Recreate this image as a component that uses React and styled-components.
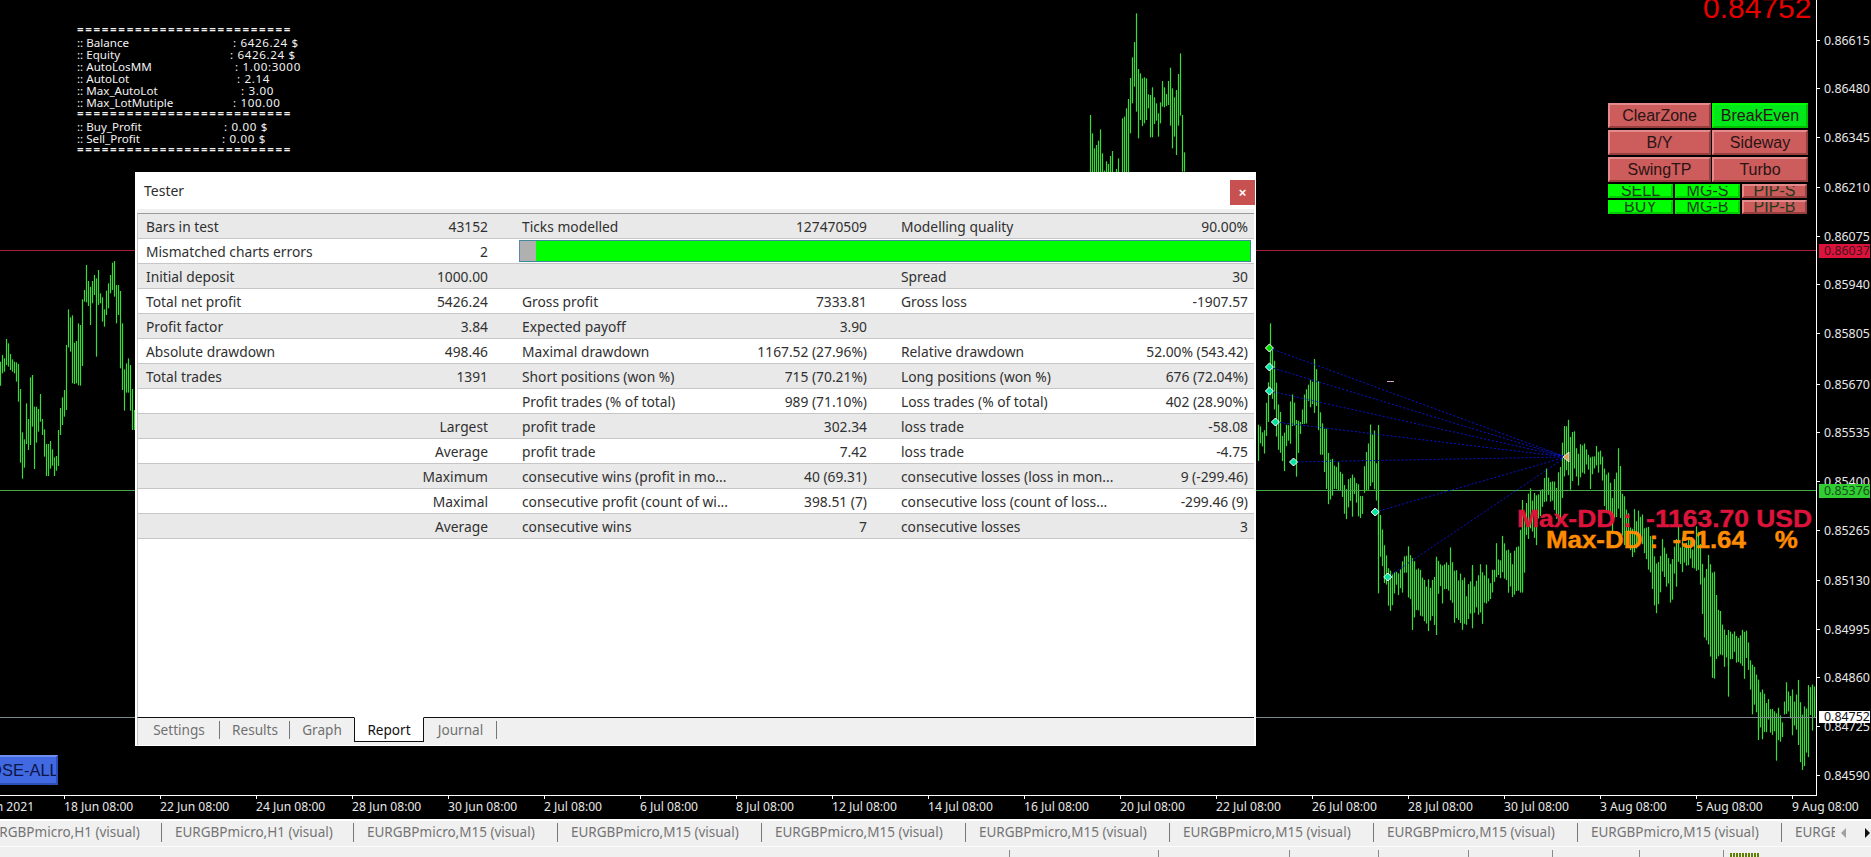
import React from 'react';
import styled, { createGlobalStyle } from 'styled-components';

const Global = createGlobalStyle`
  html, body { margin: 0; padding: 0; background: #000; overflow: hidden; }
  * { box-sizing: border-box; }
`;

const UI = `"Noto Sans", "Open Sans", sans-serif`;
const ARIAL = `"Liberation Sans", Arial, sans-serif`;

/* ---------- chart data ---------- */
const leftZ = [[365,437],[345,400],[355,395],[297,375],[310,380],[342,390],[358,395],[365,400],[367,425],[372,485],[447,668],[577,716],[598,683],[490,612],[537,630],[412,615],[405,560],[500,687],[500,608],[507,575],[462,545],[537,585],[568,650],[612,708],[612,708],[603,686],[628,677],[652,708],[648,692],[570,678],[504,585],[472,555],[450,530],[315,510],[208,322],[232,335],[226,430],[308,432],[303,430],[250,436],[255,437],[178,378],[150,185],[75,187],[123,198],[140,255],[123,190],[105,165],[115,350],[90,195],[160,190],[172,245],[208,260],[152,225],[130,205],[105,160],[68,150],[63,170],[135,250],[135,225],[153,385],[250,450],[388,512],[370,458],[355,458],[375,512],[447,570],[510,570]];
const leftBars = leftZ.map(([t, b], i) => [i * 2, 240 + t / 3, 240 + b / 3]);

const topZ = [[151,345],[157,400],[163,445],[169,435],[175,422],[181,388],[187,460],[193,512],[199,484],[205,492],[211,468],[217,453],[229,507],[235,475],[247,355],[253,350],[259,325],[265,297]];
const topZ2 = [[271,234,400],[277,172,310],[283,126,260],[289,40,335],[295,207,415],[301,220,360],[307,235,378],[313,232,370],[319,235,360],[325,283,325],[331,285,412],[337,262,412],[343,292,372],[349,310,362],[355,340,410],[361,307,370],[367,243,320],[373,262,322],[379,282,318],[385,243,315],[391,203,377],[397,265,445],[403,292,410],[409,270,465],[415,222,377],[421,160,347],[427,345,515],[433,457,515]];
const topBars = [
  ...topZ.map(([x, t]) => [Math.round(1040 + x / 3), t / 3, 172]),
  ...topZ2.map(([x, t, b]) => [Math.round(1040 + x / 3), t / 3, b / 3]),
];

const z5 = ([x, t, b]) => [1240 + x / 2.485, 300 + t / 3, 300 + b / 3];
const z7 = ([x, t, b]) => [1240 + x / 2.485, 640 + t / 3, 640 + b / 3];
const env = [
  ...[[40,395,445],[50,395,430],[60,395,470],[68,310,380],[76,150,250],[82,160,300],[88,210,380],[95,310,450],[105,395,470],[115,375,440],[125,340,400],[132,297,380],[140,360,420],[150,360,380],[160,290,360],[170,250,300],[178,265,330],[187,190,320],[192,190,330],[198,340,480],[205,380,480],[215,425,560],[225,470,600],[240,500,570],[250,520,590],[262,560,655],[275,530,600],[285,550,590],[295,570,640],[305,590,640],[310,450,570],[325,415,560],[335,400,500],[342,640,700],[350,680,800],[360,770,845],[375,830,950],[385,820,870],[398,820,870],[410,770,800],[420,745,870],[430,800,950],[440,800,930],[455,850,970],[470,880,980],[485,800,900],[500,790,860],[515,775,850],[530,810,930],[545,830,970],[560,880,980],[575,830,940],[590,860,930],[605,825,920],[620,840,900],[635,775,850],[650,760,830],[660,740,850],[675,780,880],[690,730,860],[702,700,860],[708,600,720],[720,590,700],[735,590,705],[745,560,640],[755,550,610],[765,520,590],[775,540,600],[785,550,650],[795,520,650],[802,385,520],[812,360,500],[820,410,570],[830,400,490],[840,460,550],[850,435,530],[860,450,500],[875,470,520],[888,450,500],[897,435,510],[905,510,610],[915,530,640],[925,580,670],[938,470,620],[948,560,690],[960,650,720],[975,690,780],[990,640,720],[1005,670,750],[1020,700,820],[1030,780,940],[1040,800,900],[1050,710,810],[1065,790,870],[1085,720,800],[1100,740,800],[1125,735,790],[1140,690,810],[1150,850,960]].map(z5),
  [1240 + 1163 / 2.485, 560, 650],
  [1240 + 1178 / 2.485, 573, 666],
  [1240 + 1190 / 2.485, 617, 653],
  ...[[1205,-18,70],[1225,-24,50],[1240,-12,65],[1260,-24,60],[1270,70,185],[1280,80,200],[1288,130,270],[1296,170,265],[1303,140,260],[1310,195,240],[1318,215,280],[1325,220,280],[1333,220,290],[1340,220,285],[1347,230,295],[1353,155,225],[1360,170,230],[1370,180,240],[1380,180,240],[1388,118,320],[1394,230,402],[1402,235,350],[1412,170,318],[1417,125,230],[1427,150,230],[1433,185,232]].map(z7),
];
const spikes = [
  ...[[76,70,250],[140,360,530],[342,375,880],[425,790,990],[485,770,1005],[575,795,985],[702,600,870]].map(z5),
  z7([1215, -4, 170]),
  z7([1288, 130, 300]),
  z7([1333, 220, 362]),
];
const noise = (i) => {
  const v = Math.sin(i * 12.9898) * 43758.5453;
  return (v - Math.floor(v)) * 2 - 1;
};
const lerp = (x, k) => {
  for (let i = 0; i < env.length - 1; i += 1) {
    const a = env[i];
    const b = env[i + 1];
    if (x >= a[0] && x <= b[0]) {
      const f = (x - a[0]) / (b[0] - a[0] || 1);
      return a[k] + (b[k] - a[k]) * f;
    }
  }
  return null;
};
const rightBars = [];
for (let x = 1256, i = 0; x < 1817; x += 2, i += 1) {
  const t = lerp(x, 1);
  const b = lerp(x, 2);
  if (t !== null) {
    const top = t + noise(i) * 6 - (noise(i * 5 + 11) > 0.8 ? 12 : 0);
    const bottom = b + noise(i + 500) * 6 + (noise(i * 7 + 3) > 0.75 ? 14 : 0);
    rightBars.push([x, top, Math.max(bottom, top + 12)]);
  }
}
const allBars = [...leftBars, ...topBars, ...rightBars, ...spikes.map(([x, t, b]) => [Math.round(x / 2) * 2, t, b])];

const targets = [[1269.4, 348, '#00e000'], [1269.4, 367, '#00e8a0'], [1269.4, 391, '#00e8a0'], [1275.4, 422, '#00e8a0'], [1293.5, 462, '#00e8a0'], [1375.2, 512, '#00e8a0'], [1387.7, 577, '#00e8a0']];

const Candles = styled.svg`
  position: absolute;
  left: 0;
  top: 0;
  width: 1817px;
  height: 795px;
`;

const ChartDrawing = () => (
  <Candles viewBox="0 0 1817 795">
    <g stroke="#38dc38" strokeWidth="1.2">
      {allBars.map(([x, t, b], i) => (
        <line key={i} x1={x + 0.5} x2={x + 0.5} y1={t} y2={b} />
      ))}
    </g>
    <line x1="0" x2="1817" y1="250.5" y2="250.5" stroke="#a5213a" />
    <line x1="0" x2="1817" y1="490.5" y2="490.5" stroke="#44a844" />
    <line x1="0" x2="1817" y1="717.5" y2="717.5" stroke="#7a8a90" />
    <line x1="1387" x2="1394" y1="381.5" y2="381.5" stroke="#d8a0d0" />
    <g stroke="#0a14d0" strokeWidth="1" strokeDasharray="2 2">
      {targets.map(([x, y], i) => (
        <line key={i} x1={x} y1={y} x2="1566" y2="457" />
      ))}
    </g>
    {targets.map(([x, y, c], i) => (
      <path key={i} d={`M${x - 4} ${y}L${x} ${y - 4}L${x + 4} ${y}L${x} ${y + 4}Z`} fill={c} stroke="#fff" strokeWidth="1" />
    ))}
    <path d="M1563 457L1569 452L1569 462Z" fill="#d8a050" stroke="#fff" strokeWidth="0.8" />
  </Candles>
);

/* ---------- page frame ---------- */
const Page = styled.div`
  width: 1871px;
  height: 857px;
  display: flex;
  flex-direction: column;
  overflow: hidden;
  background: #000;
  font-family: ${UI};
`;
const ChartRow = styled.div`
  display: flex;
  height: 796px;
  flex: none;
`;
const Plot = styled.div`
  position: relative;
  width: 1817px;
  height: 796px;
  border-bottom: 1px solid #fff;
  overflow: hidden;
  flex: none;
`;

/* ---------- price axis ---------- */
const PriceAxis = styled.div`
  position: relative;
  width: 54px;
  height: 796px;
  margin-left: -1px;
  border-left: 1px solid #fff;
  flex: none;
  overflow: hidden;
`;
const PriceMark = styled.div.attrs((p) => ({ style: { top: `${p.$y - 7}px` } }))`
  position: absolute;
  left: 0;
  width: 54px;
  height: 14px;
  padding-left: 7px;
  font: 12.4px/14px ${UI};
  color: #e8e8e8;
  white-space: nowrap;
  &::before {
    content: '';
    position: absolute;
    left: 0;
    top: 6px;
    width: 3px;
    height: 1px;
    background: #fff;
  }
`;
const PriceTag = styled.div.attrs((p) => ({ style: { top: `${p.$y}px` } }))`
  position: absolute;
  left: 2px;
  width: 52px;
  height: ${(p) => p.$h}px;
  padding-left: 5px;
  font: 12.4px/${(p) => p.$h}px ${UI};
  background: ${(p) => p.$bg};
  color: ${(p) => p.$fg};
`;

/* ---------- chart overlays ---------- */
const StatsPanel = styled.div`
  position: absolute;
  left: 77px;
  top: 25px;
  color: #f2f2f2;
  font: 11.6px/12px ${UI};
  white-space: pre;
`;
const StatRule = styled.div`
  height: 12px;
  line-height: 10px;
  letter-spacing: 1.64px;
  font-size: 11.6px;
  font-weight: 600;
`;
const StatRow = styled.div`
  display: flex;
  height: 12px;
`;
const StatLabel = styled.span`
  width: ${(p) => p.$w}px;
  flex: none;
`;
const StatValue = styled.span`
  letter-spacing: 0.65px;
`;
const BigPrice = styled.div`
  position: absolute;
  left: 1703px;
  top: -7px;
  font: 30px/30px ${ARIAL};
  color: #e60000;
`;
const DrawdownLine = styled.div`
  position: absolute;
  left: ${(p) => p.$x}px;
  top: ${(p) => p.$y}px;
  font: bold 23px/23px ${ARIAL};
  color: ${(p) => p.$c};
  -webkit-text-stroke: 0.4px ${(p) => p.$c};
  white-space: pre;
  transform: scaleX(${(p) => p.$sx});
  transform-origin: left center;
`;
const CloseAll = styled.div`
  position: absolute;
  left: -34px;
  top: 755px;
  width: 92px;
  height: 30px;
  background: #4169e1;
  border: 2px solid;
  border-color: #6d8ef0 #2f4fb8 #2f4fb8 #6d8ef0;
  color: #0c1648;
  font: 16.5px/26px ${ARIAL};
  text-align: center;
  overflow: hidden;
  white-space: nowrap;
`;

const ButtonPanel = styled.div`
  position: absolute;
  left: 1608px;
  top: 103px;
  display: flex;
  flex-direction: column;
`;
const BigRow = styled.div`
  display: flex;
  gap: 1px;
  margin-bottom: 2px;
`;
const SmallRow = styled.div`
  display: flex;
  gap: 2px;
  margin-bottom: 2px;
`;
const tones = {
  red: ['#cd5c5c', '#e58a8a', '#973f3f'],
  green: ['#00e81a', '#00ff00', '#00c000'],
  lime: ['#00ff00', '#00ff00', '#00cc00'],
};
const BigButton = styled.div`
  width: ${(p) => p.$w}px;
  height: 25px;
  background: ${(p) => tones[p.$tone][0]};
  border: 2px solid;
  border-color: ${(p) => tones[p.$tone][1]} ${(p) => tones[p.$tone][2]} ${(p) => tones[p.$tone][2]} ${(p) => tones[p.$tone][1]};
  color: #2a1414;
  font: 16px/21px ${ARIAL};
  text-align: center;
  overflow: hidden;
`;
const SmallButton = styled.div`
  width: 65px;
  height: 14px;
  background: ${(p) => tones[p.$tone][0]};
  border: 2px solid;
  border-color: ${(p) => tones[p.$tone][1]} ${(p) => tones[p.$tone][2]} ${(p) => tones[p.$tone][2]} ${(p) => tones[p.$tone][1]};
  color: #1c3a1c;
  font: 16px/10px ${ARIAL};
  text-align: center;
  overflow: hidden;
`;

/* ---------- tester window ---------- */
const TesterWindow = styled.section`
  position: absolute;
  left: 135px;
  top: 172px;
  width: 1121px;
  height: 574px;
  display: flex;
  flex-direction: column;
  background: #fff;
  padding: 0 2px 1px;
`;
const TitleBar = styled.header`
  height: 37px;
  flex: none;
  margin: 0 -2px;
  padding: 8px 1px 0 9px;
  display: flex;
  justify-content: space-between;
  align-items: flex-start;
  background: #fff;
  font: 14px/21px ${UI};
  color: #2d2d2d;
`;
const CloseButton = styled.button`
  width: 25px;
  height: 25px;
  border: 0;
  padding: 0;
  background: #c75050;
  color: #fff;
  font: bold 13px/25px ${ARIAL};
`;
const HeadGap = styled.div`
  height: 4px;
  flex: none;
  background: #f0f0f0;
`;
const ReportPane = styled.div`
  flex: 1;
  background: #fff;
  border-top: 1px solid #9a9a9a;
  border-left: 1px solid #c4c4c4;
`;
const ReportRow = styled.div`
  display: grid;
  grid-template-columns: 350px 379px 381px;
  height: 25px;
  border-bottom: 1px solid #c6c6c6;
  background: ${(p) => (p.$shade ? '#e9e9e9' : '#fff')};
`;
const Cell = styled.div`
  display: flex;
  justify-content: space-between;
  align-items: center;
  padding: 1px 0 0 ${(p) => p.$pad}px;
  font: 13.8px/23px ${UI};
  color: #303030;
  white-space: nowrap;
`;
const ProgressCell = styled.div`
  grid-column: 2 / 4;
  display: flex;
  margin: 1px -3px 1px 31px;
  height: 22px;
  border: 1px solid #3c8a9c;
  border-left-color: #5a86b0;
`;
const ProgressDone = styled.div`
  width: 16px;
  background: #b0b0b0;
  flex: none;
`;
const ProgressRest = styled.div`
  flex: 1;
  background: #00ff00;
`;
const TesterTabs = styled.nav`
  height: 28px;
  flex: none;
  display: flex;
  align-items: flex-start;
  background: #f0f0f0;
  border-top: 1px solid #111;
  border-left: 1px solid #c4c4c4;
`;
const TesterTab = styled.div`
  height: 24px;
  margin-top: ${(p) => (p.$active ? '-1px' : '0')};
  width: ${(p) => p.$w}px;
  text-align: center;
  font: 13.6px/23px ${UI};
  color: ${(p) => (p.$active ? '#111' : '#707070')};
  background: ${(p) => (p.$active ? '#fff' : 'transparent')};
  position: relative;
  ${(p) => (p.$active
    ? 'border: 1px solid #111; border-top-color: #fff; height: 25px;'
    : '')}
  ${(p) => (p.$sep
    ? `&::after { content: ''; position: absolute; right: 0; top: 3px; height: 18px; width: 1px; background: #777; }`
    : '')}
`;

/* ---------- time axis and bottom bars ---------- */
const TimeAxis = styled.div`
  height: 23px;
  flex: none;
  overflow: hidden;
  display: flex;
  margin-left: -32px;
`;
const TimeCell = styled.div`
  position: relative;
  flex: none;
  width: 96px;
  padding-top: 3px;
  font: 12.1px/16px ${UI};
  color: #e8e8e8;
  white-space: nowrap;
  &::before {
    content: '';
    position: absolute;
    left: 0;
    top: 0;
    width: 1px;
    height: 3px;
    background: #fff;
  }
`;
const ChartTabs = styled.div`
  height: 27px;
  flex: none;
  display: flex;
  background: #f0f0f0;
  border-top: 2px solid #fff;
`;
const TabStrip = styled.div`
  width: 1835px;
  flex: none;
  display: flex;
  align-items: center;
  overflow: hidden;
  padding-bottom: 2px;
`;
const TabStripInner = styled.div`
  display: flex;
  align-items: center;
  margin-left: -31px;
`;
const ChartTab = styled.div`
  width: ${(p) => p.$w}px;
  flex: none;
  height: 19px;
  padding-left: 13px;
  border-right: 1px solid #777;
  font: 13.5px/19px ${UI};
  color: #747474;
  white-space: nowrap;
  overflow: hidden;
`;
const ScrollArrows = styled.div`
  flex: 1;
  display: flex;
  align-items: center;
  gap: 19px;
  padding: 0 0 2px 6px;
`;
const StatusBar = styled.div`
  height: 11px;
  flex: none;
  display: flex;
  background: #f0f0f0;
  border-top: 1px solid #fbfbfb;
  padding-top: 3px;
`;
const StatusCell = styled.div`
  width: ${(p) => p.$w}px;
  flex: none;
  border-right: 1px solid #8a8a8a;
`;
const Traffic = styled.div`
  display: flex;
  gap: 1px;
  margin: 3px 0 0 6px;
`;
const TrafficTick = styled.span`
  width: 2px;
  height: 4px;
  background: #5f7f00;
`;

/* ---------- content ---------- */
const prices = [['0.86615', 41], ['0.86480', 89], ['0.86345', 138], ['0.86210', 188], ['0.86075', 237], ['0.85940', 285], ['0.85805', 334], ['0.85670', 385], ['0.85535', 433], ['0.85400', 482], ['0.85265', 531], ['0.85130', 581], ['0.84995', 630], ['0.84860', 678], ['0.84725', 727], ['0.84590', 776]];
const times = ['15 Jun 2021', '18 Jun 08:00', '22 Jun 08:00', '24 Jun 08:00', '28 Jun 08:00', '30 Jun 08:00', '2 Jul 08:00', '6 Jul 08:00', '8 Jul 08:00', '12 Jul 08:00', '14 Jul 08:00', '16 Jul 08:00', '20 Jul 08:00', '22 Jul 08:00', '26 Jul 08:00', '28 Jul 08:00', '30 Jul 08:00', '3 Aug 08:00', '5 Aug 08:00', '9 Aug 08:00'];
const stats = [
  ['rule'],
  [':: Balance', ': 6426.24 $', 156],
  [':: Equity', ': 6426.24 $', 153],
  [':: AutoLosMM', ': 1.00:3000', 158],
  [':: AutoLot', ': 2.14', 160],
  [':: Max_AutoLot', ': 3.00', 164],
  [':: Max_LotMutiple', ': 100.00', 156],
  ['rule'],
  [':: Buy_Profit', ': 0.00 $', 147],
  [':: Sell_Profit', ': 0.00 $', 145],
  ['rule'],
];
const rows = [
  ['Bars in test', '43152', 'Ticks modelled', '127470509', 'Modelling quality', '90.00%'],
  ['Mismatched charts errors', '2'],
  ['Initial deposit', '1000.00', '', '', 'Spread', '30'],
  ['Total net profit', '5426.24', 'Gross profit', '7333.81', 'Gross loss', '-1907.57'],
  ['Profit factor', '3.84', 'Expected payoff', '3.90', '', ''],
  ['Absolute drawdown', '498.46', 'Maximal drawdown', '1167.52 (27.96%)', 'Relative drawdown', '52.00% (543.42)'],
  ['Total trades', '1391', 'Short positions (won %)', '715 (70.21%)', 'Long positions (won %)', '676 (72.04%)'],
  ['', '', 'Profit trades (% of total)', '989 (71.10%)', 'Loss trades (% of total)', '402 (28.90%)'],
  ['', 'Largest', 'profit trade', '302.34', 'loss trade', '-58.08'],
  ['', 'Average', 'profit trade', '7.42', 'loss trade', '-4.75'],
  ['', 'Maximum', 'consecutive wins (profit in mo...', '40 (69.31)', 'consecutive losses (loss in mon...', '9 (-299.46)'],
  ['', 'Maximal', 'consecutive profit (count of wi...', '398.51 (7)', 'consecutive loss (count of loss...', '-299.46 (9)'],
  ['', 'Average', 'consecutive wins', '7', 'consecutive losses', '3'],
];
const testerTabs = [['Settings', 82, true], ['Results', 70, true], ['Graph', 64, false], ['Report', 70, false], ['Journal', 73, true]];
const chartTabs = [['EURGBPmicro,H1 (visual)', 193], ['EURGBPmicro,H1 (visual)', 192], ...Array.from({ length: 8 }, () => ['EURGBPmicro,M15 (visual)', 204])];
const statusCells = [1010, 149, 131, 89, 90, 84, 87, 84];

export default function App() {
  return (
    <Page>
      <Global />
      <ChartRow>
        <Plot>
          <ChartDrawing />
          <StatsPanel>
            {stats.map((s, i) => (s[0] === 'rule'
              ? <StatRule key={i}>==========================</StatRule>
              : <StatRow key={i}><StatLabel $w={s[2]}>{s[0]}</StatLabel><StatValue>{s[1]}</StatValue></StatRow>))}
          </StatsPanel>
          <BigPrice>0.84752</BigPrice>
          <ButtonPanel>
            <BigRow><BigButton $w={103} $tone="red">ClearZone</BigButton><BigButton $w={96} $tone="green">BreakEven</BigButton></BigRow>
            <BigRow><BigButton $w={103} $tone="red">B/Y</BigButton><BigButton $w={96} $tone="red">Sideway</BigButton></BigRow>
            <BigRow><BigButton $w={103} $tone="red">SwingTP</BigButton><BigButton $w={96} $tone="red">Turbo</BigButton></BigRow>
            <SmallRow><SmallButton $tone="lime">SELL</SmallButton><SmallButton $tone="lime">MG-S</SmallButton><SmallButton $tone="red">PIP-S</SmallButton></SmallRow>
            <SmallRow><SmallButton $tone="lime">BUY</SmallButton><SmallButton $tone="lime">MG-B</SmallButton><SmallButton $tone="red">PIP-B</SmallButton></SmallRow>
          </ButtonPanel>
          <DrawdownLine $x={1517} $y={508} $c="#dc143c" $sx={1.148}>{'Max-DD :  -1163.70 USD'}</DrawdownLine>
          <DrawdownLine $x={1546} $y={529} $c="#ff8c00" $sx={1.125}>{'Max-DD :  -51.64    %'}</DrawdownLine>
          <CloseAll>CLOSE-ALL</CloseAll>
          <TesterWindow>
            <TitleBar>
              <span>Tester</span>
              <CloseButton aria-label="Close">×</CloseButton>
            </TitleBar>
            <HeadGap />
            <ReportPane>
              {rows.map((r, i) => (
                <ReportRow key={i} $shade={i % 2 === 0}>
                  <Cell $pad={8}><span>{r[0]}</span><span>{r[1]}</span></Cell>
                  {r.length === 2 ? (
                    <ProgressCell><ProgressDone /><ProgressRest /></ProgressCell>
                  ) : (
                    <>
                      <Cell $pad={34}><span>{r[2]}</span><span>{r[3]}</span></Cell>
                      <Cell $pad={34}><span>{r[4]}</span><span>{r[5]}</span></Cell>
                    </>
                  )}
                </ReportRow>
              ))}
            </ReportPane>
            <TesterTabs>
              {testerTabs.map(([t, w, sep]) => (
                <TesterTab key={t} $w={w} $sep={sep} $active={t === 'Report'}>{t}</TesterTab>
              ))}
            </TesterTabs>
          </TesterWindow>
        </Plot>
        <PriceAxis>
          {prices.map(([p, y]) => <PriceMark key={p} $y={y}>{p}</PriceMark>)}
          <PriceTag $y={244} $h={14} $bg="#dc143c" $fg="#4a1020">0.86037</PriceTag>
          <PriceTag $y={484} $h={14} $bg="#32cd32" $fg="#14501a">0.85376</PriceTag>
          <PriceTag $y={711} $h={12} $bg="#fff" $fg="#111">0.84752</PriceTag>
        </PriceAxis>
      </ChartRow>
      <TimeAxis>
        {times.map((t) => <TimeCell key={t}>{t}</TimeCell>)}
      </TimeAxis>
      <ChartTabs>
        <TabStrip>
          <TabStripInner>
            {chartTabs.map(([t, w], i) => <ChartTab key={i} $w={w}>{t}</ChartTab>)}
          </TabStripInner>
        </TabStrip>
        <ScrollArrows>
          <svg width="5" height="10" viewBox="0 0 5 10"><path d="M5 0L0 5L5 10Z" fill="#a0a0a0" /></svg>
          <svg width="5" height="10" viewBox="0 0 5 10"><path d="M0 0L5 5L0 10Z" fill="#111" /></svg>
        </ScrollArrows>
      </ChartTabs>
      <StatusBar>
        {statusCells.map((w, i) => <StatusCell key={i} $w={w} />)}
        <Traffic>
          {Array.from({ length: 10 }, (_, i) => <TrafficTick key={i} />)}
        </Traffic>
      </StatusBar>
    </Page>
  );
}
